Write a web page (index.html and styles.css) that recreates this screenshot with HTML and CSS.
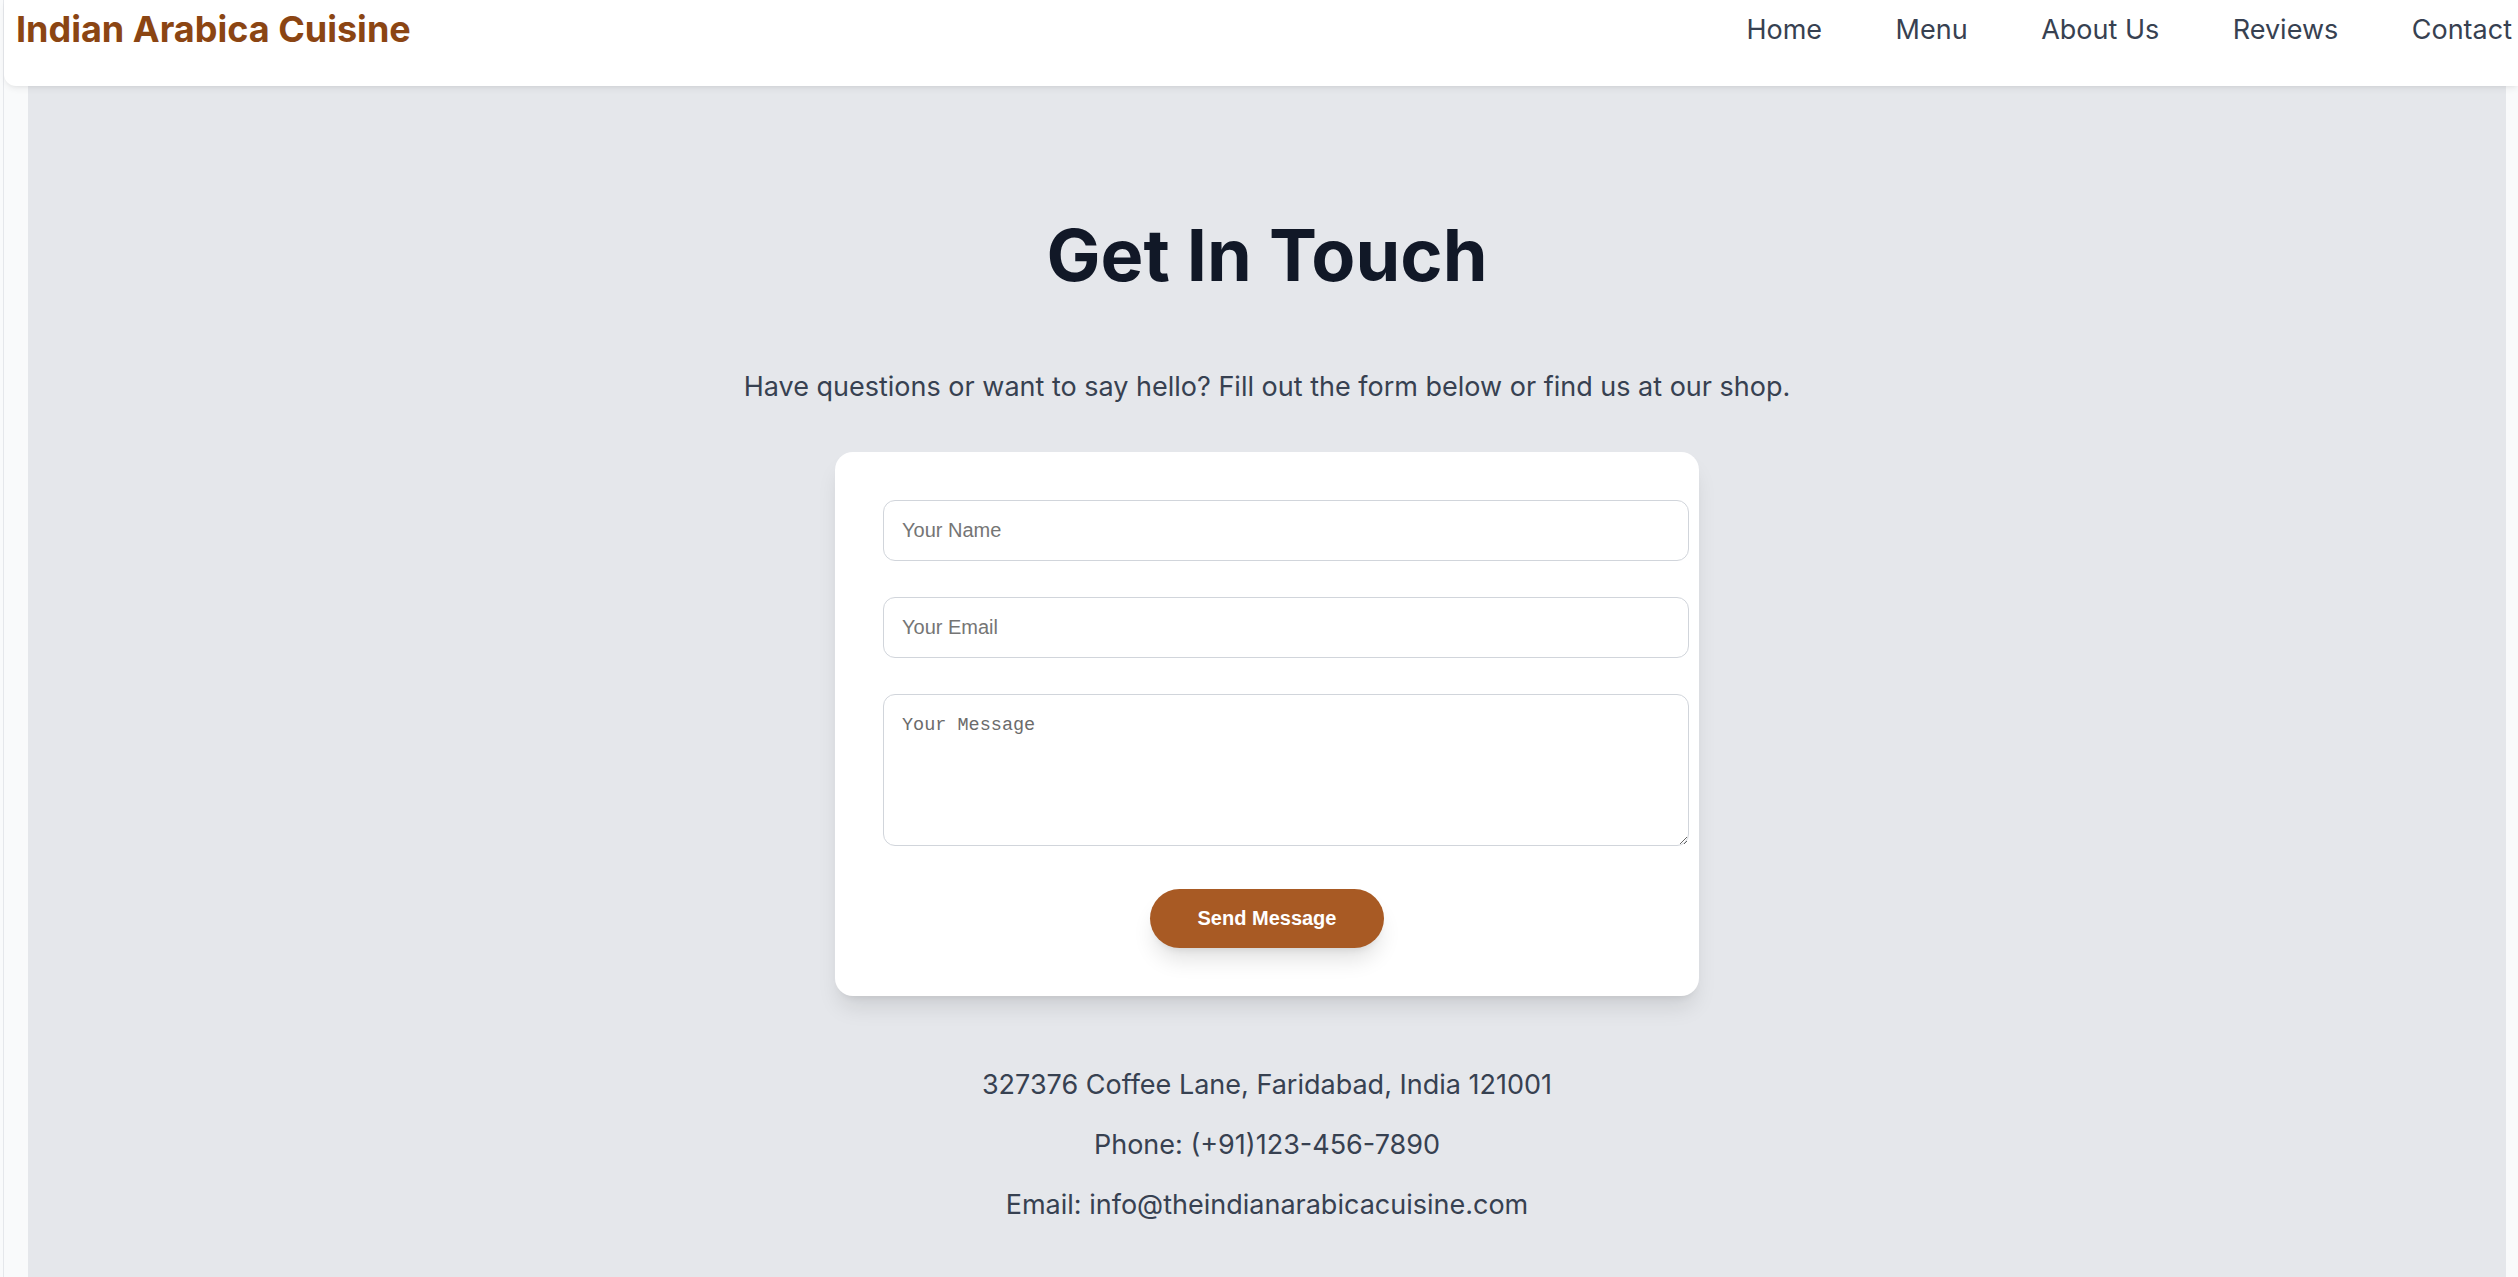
FILE: index.html
```html
<!DOCTYPE html>
<html lang="en">
<head>
<meta charset="utf-8">
<title>Indian Arabica Cuisine - Contact</title>
<link rel="stylesheet" href="styles.css">
</head>
<body>
<div class="frame">
  <header class="site-header">
    <div class="logo">Indian Arabica Cuisine</div>
    <nav class="nav">
      <a href="#" class="nav-link">Home</a>
      <a href="#" class="nav-link">Menu</a>
      <a href="#" class="nav-link">About Us</a>
      <a href="#" class="nav-link">Reviews</a>
      <a href="#" class="nav-link">Contact</a>
    </nav>
  </header>
  <section class="contact">
    <h1 class="title">Get In Touch</h1>
    <p class="subtitle">Have questions or want to say hello? Fill out the form below or find us at our shop.</p>
    <form class="card">
      <input class="field" type="text" placeholder="Your Name">
      <input class="field" type="email" placeholder="Your Email">
      <textarea class="field area" rows="5" placeholder="Your Message"></textarea>
      <div class="actions">
        <button type="button" class="btn">Send Message</button>
      </div>
    </form>
    <div class="info">
      <p class="info-line">327376 Coffee Lane, Faridabad, India 121001</p>
      <p class="info-line">Phone: (+91)123-456-7890</p>
      <p class="info-line">Email: info@theindianarabicacuisine.com</p>
    </div>
  </section>
</div>
</body>
</html>
```
FILE: styles.css
```css
html, body {
  margin: 0;
  padding: 0;
}
body {
  background: #f9fafb;
  font-family: Inter, "Noto Sans", sans-serif;
  color: #374151;
  overflow: hidden;
  height: 1277px;
}
.frame {
  margin-left: 3px;
  border-left: 1px solid #e5e7eb;
  min-height: 1277px;
  display: flex;
  flex-direction: column;
}
.site-header {
  position: relative;
  z-index: 2;
  height: 86px;
  box-sizing: border-box;
  background: #ffffff;
  border-bottom-left-radius: 12px;
  box-shadow: 0 4px 6px -1px rgba(0,0,0,0.06), 0 2px 4px -2px rgba(0,0,0,0.06);
  display: flex;
  justify-content: space-between;
  align-items: flex-start;
  padding: 0 6px 0 12px;
}
.logo {
  font-size: 36px;
  line-height: 48px;
  font-weight: 700;
  color: #8b4513;
  margin-top: 5px;
}
.nav {
  display: flex;
  gap: 73.5px;
  margin-top: 9px;
}
.nav-link {
  font-size: 27px;
  line-height: 42px;
  color: #374151;
  text-decoration: none;
}
.contact {
  flex: 1;
  background: #e5e7eb;
  margin: 0 12px 0 24px;
  padding-top: 133px;
  display: flex;
  flex-direction: column;
  align-items: center;
}
.title {
  margin: 0;
  font-size: 72px;
  line-height: 72px;
  font-weight: 700;
  color: #111827;
}
.subtitle {
  margin: 75px 0 44px;
  font-size: 27px;
  line-height: 42px;
  color: #374151;
}
.card {
  width: 768px;
  padding: 48px;
  background: #ffffff;
  border-radius: 18px;
  box-shadow: 0 15px 22px -4px rgba(0,0,0,0.1), 0 6px 9px -6px rgba(0,0,0,0.1);
}
.field {
  display: block;
  box-sizing: content-box;
  width: 100%;
  margin: 0 0 36px;
  padding: 18px;
  border: 1px solid #d1d5db;
  border-radius: 12px;
  background: #ffffff;
  font-family: "Liberation Sans", Arial, sans-serif;
  font-size: 20px;
  color: #111827;
  outline: none;
}
.field::placeholder {
  color: #757575;
}
.area {
  font-family: "Liberation Mono", "DejaVu Sans Mono", monospace;
  font-size: 18.5px;
  line-height: 24px;
  padding-top: 19px;
  height: 113px;
  margin-bottom: 43px;
  resize: vertical;
}
.area::placeholder {
  color: #6b6b6b;
}
.actions {
  display: flex;
  justify-content: center;
}
.btn {
  border: none;
  background: #a85a24;
  color: #ffffff;
  font-family: "Liberation Sans", Arial, sans-serif;
  font-weight: 700;
  font-size: 20px;
  line-height: 23px;
  padding: 18px 48px;
  border-radius: 999px;
  box-shadow: 0 15px 22px -4px rgba(0,0,0,0.12), 0 6px 9px -6px rgba(0,0,0,0.12);
  cursor: pointer;
}
.info {
  margin-top: 68px;
  text-align: center;
}
.info-line {
  margin: 0 0 18px;
  font-size: 27px;
  line-height: 42px;
  color: #374151;
}
```
